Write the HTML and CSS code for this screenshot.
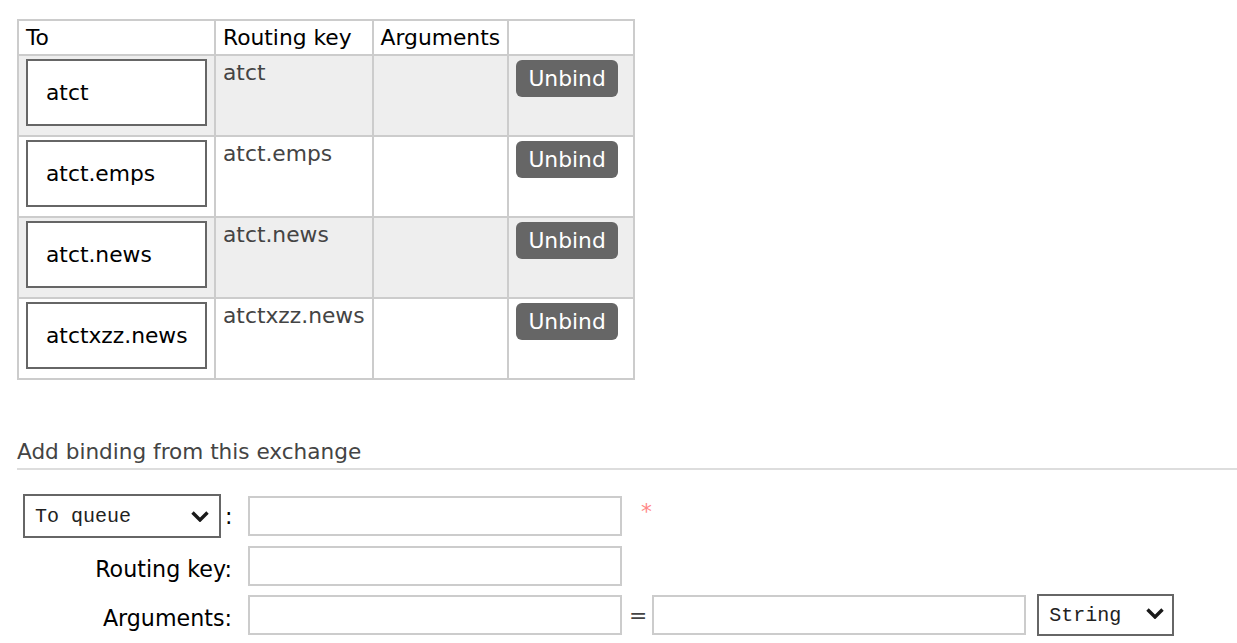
FILE: index.html
```html
<!DOCTYPE html>
<html lang="en">
<head>
<meta charset="utf-8">
<title>Bindings</title>
<link rel="stylesheet" href="styles.css">
</head>
<body>
<div class="page">
  <table class="bindings">
    <thead>
      <tr>
        <th class="c-to">To</th>
        <th class="c-key">Routing key</th>
        <th class="c-args">Arguments</th>
        <th class="c-act"></th>
      </tr>
    </thead>
    <tbody>
      <tr class="alt">
        <td><span class="qbox">atct</span></td>
        <td class="key">atct</td>
        <td></td>
        <td><button class="unbind" type="button">Unbind</button></td>
      </tr>
      <tr>
        <td><span class="qbox">atct.emps</span></td>
        <td class="key">atct.emps</td>
        <td></td>
        <td><button class="unbind" type="button">Unbind</button></td>
      </tr>
      <tr class="alt">
        <td><span class="qbox">atct.news</span></td>
        <td class="key">atct.news</td>
        <td></td>
        <td><button class="unbind" type="button">Unbind</button></td>
      </tr>
      <tr>
        <td><span class="qbox">atctxzz.news</span></td>
        <td class="key">atctxzz.news</td>
        <td></td>
        <td><button class="unbind" type="button">Unbind</button></td>
      </tr>
    </tbody>
  </table>

  <h3 class="section-title">Add binding from this exchange</h3>

  <form class="bind-form">
    <div class="form-row">
      <div class="label-cell">
        <div class="select-wrap sel-dest">
          <select class="sel"><option>To queue</option><option>To exchange</option></select>
          <svg class="chev" width="18" height="11" viewBox="0 0 18 11"><polyline points="1.5,1.5 9,9 16.5,1.5" fill="none" stroke="#1a1a1a" stroke-width="3.4" stroke-linecap="butt" stroke-linejoin="miter"/></svg>
        </div>
        <span class="colon">:</span>
      </div>
      <input class="field" type="text">
      <span class="mand">*</span>
    </div>
    <div class="form-row">
      <label class="label-cell text-label">Routing key:</label>
      <input class="field" type="text">
    </div>
    <div class="form-row">
      <label class="label-cell text-label">Arguments:</label>
      <input class="field" type="text">
      <span class="equals">=</span>
      <input class="field" type="text">
      <div class="select-wrap sel-type">
        <select class="sel"><option>String</option><option>Number</option><option>Boolean</option></select>
        <svg class="chev" width="18" height="11" viewBox="0 0 18 11"><polyline points="1.5,1.5 9,9 16.5,1.5" fill="none" stroke="#1a1a1a" stroke-width="3.4" stroke-linecap="butt" stroke-linejoin="miter"/></svg>
      </div>
    </div>
  </form>
</div>
</body>
</html>
```

FILE: styles.css
```css
html, body {
  margin: 0;
  padding: 0;
  background: #fff;
}

body {
  font-family: "DejaVu Sans", Verdana, sans-serif;
  font-size: 21.8px;
  color: #000;
}

.page {
  padding: 19px 0 0 17px;
}

/* ---------- bindings table ---------- */
.bindings {
  border-collapse: collapse;
  table-layout: fixed;
  border: 2px solid #ccc;
}

.bindings th,
.bindings td {
  border: 2px solid #ccc;
  text-align: left;
  vertical-align: top;
  line-height: 24px;
}

.bindings th {
  font-weight: normal;
  padding: 5px 7px 4px 7px;
  color: #000;
}

.bindings td {
  padding: 3px 7px 9px 7px;
  color: #444;
}

.bindings td.key {
  padding-top: 5px;
  padding-bottom: 7px;
}

.c-to { width: 181px; }
.c-key { width: 141px; }
.c-args { width: 119px; }
.c-act { width: 110px; }

.bindings tr.alt td {
  background: #eee;
}

.qbox {
  display: flex;
  align-items: center;
  box-sizing: border-box;
  width: 181px;
  height: 67px;
  padding-left: 18px;
  border: 2px solid #666;
  background: #fff;
  color: #000;
  white-space: nowrap;
}

.unbind {
  display: block;
  margin: 1px 0 0 0;
  box-sizing: border-box;
  width: 102px;
  height: 37px;
  padding: 0;
  border: none;
  border-radius: 6px;
  background: #666;
  color: #fff;
  font-family: "DejaVu Sans", Verdana, sans-serif;
  font-size: 21.8px;
  line-height: 37px;
  text-align: center;
}

/* ---------- section ---------- */
.section-title {
  margin: 60px 0 0 0;
  padding: 0 0 4px 0;
  font-size: 21.6px;
  font-weight: normal;
  line-height: 24px;
  color: #444;
  border-bottom: 2px solid #ddd;
}

.bind-form {
  margin-top: 24px;
  display: flex;
  flex-direction: column;
  gap: 8px;
}

.form-row {
  display: flex;
  align-items: center;
}

.label-cell {
  box-sizing: border-box;
  width: 215px;
  flex: none;
  display: flex;
  justify-content: flex-end;
  align-items: center;
  margin-right: 16px;
  color: #000;
  font-size: 22.2px;
  line-height: 24px;
  white-space: nowrap;
}

.text-label {
  padding-top: 5px;
}

.colon {
  margin-left: 4px;
  width: 7px;
}

.field {
  box-sizing: border-box;
  width: 374px;
  height: 40px;
  margin: 0;
  padding: 0 6px;
  border: 2px solid #ccc;
  background: #fff;
  font-family: "DejaVu Sans", Verdana, sans-serif;
  font-size: 21.6px;
  flex: none;
}

.mand {
  margin-left: 19px;
  color: #f88;
  align-self: flex-start;
  margin-top: 6px;
  line-height: 24px;
}

.equals {
  margin: 0 5px 0 7px;
  color: #444;
}

.select-wrap {
  position: relative;
  flex: none;
}

.sel {
  -webkit-appearance: none;
  appearance: none;
  box-sizing: border-box;
  display: block;
  margin: 0;
  border: 2px solid #666;
  border-radius: 0;
  background: #fff;
  color: #222;
  font-family: "Liberation Mono", "DejaVu Sans Mono", monospace;
  font-size: 20px;
  padding: 0 0 0 10px;
}

.sel-dest .sel {
  width: 198px;
  height: 44px;
}

.sel-type {
  margin-left: 11px;
  align-self: flex-start;
}

.sel-type .sel {
  width: 137px;
  height: 42px;
}

.chev {
  position: absolute;
  top: 50%;
  margin-top: -5px;
  pointer-events: none;
}

.sel-dest .chev {
  right: 12px;
}

.sel-type .chev {
  right: 10px;
  margin-top: -7px;
}
```
